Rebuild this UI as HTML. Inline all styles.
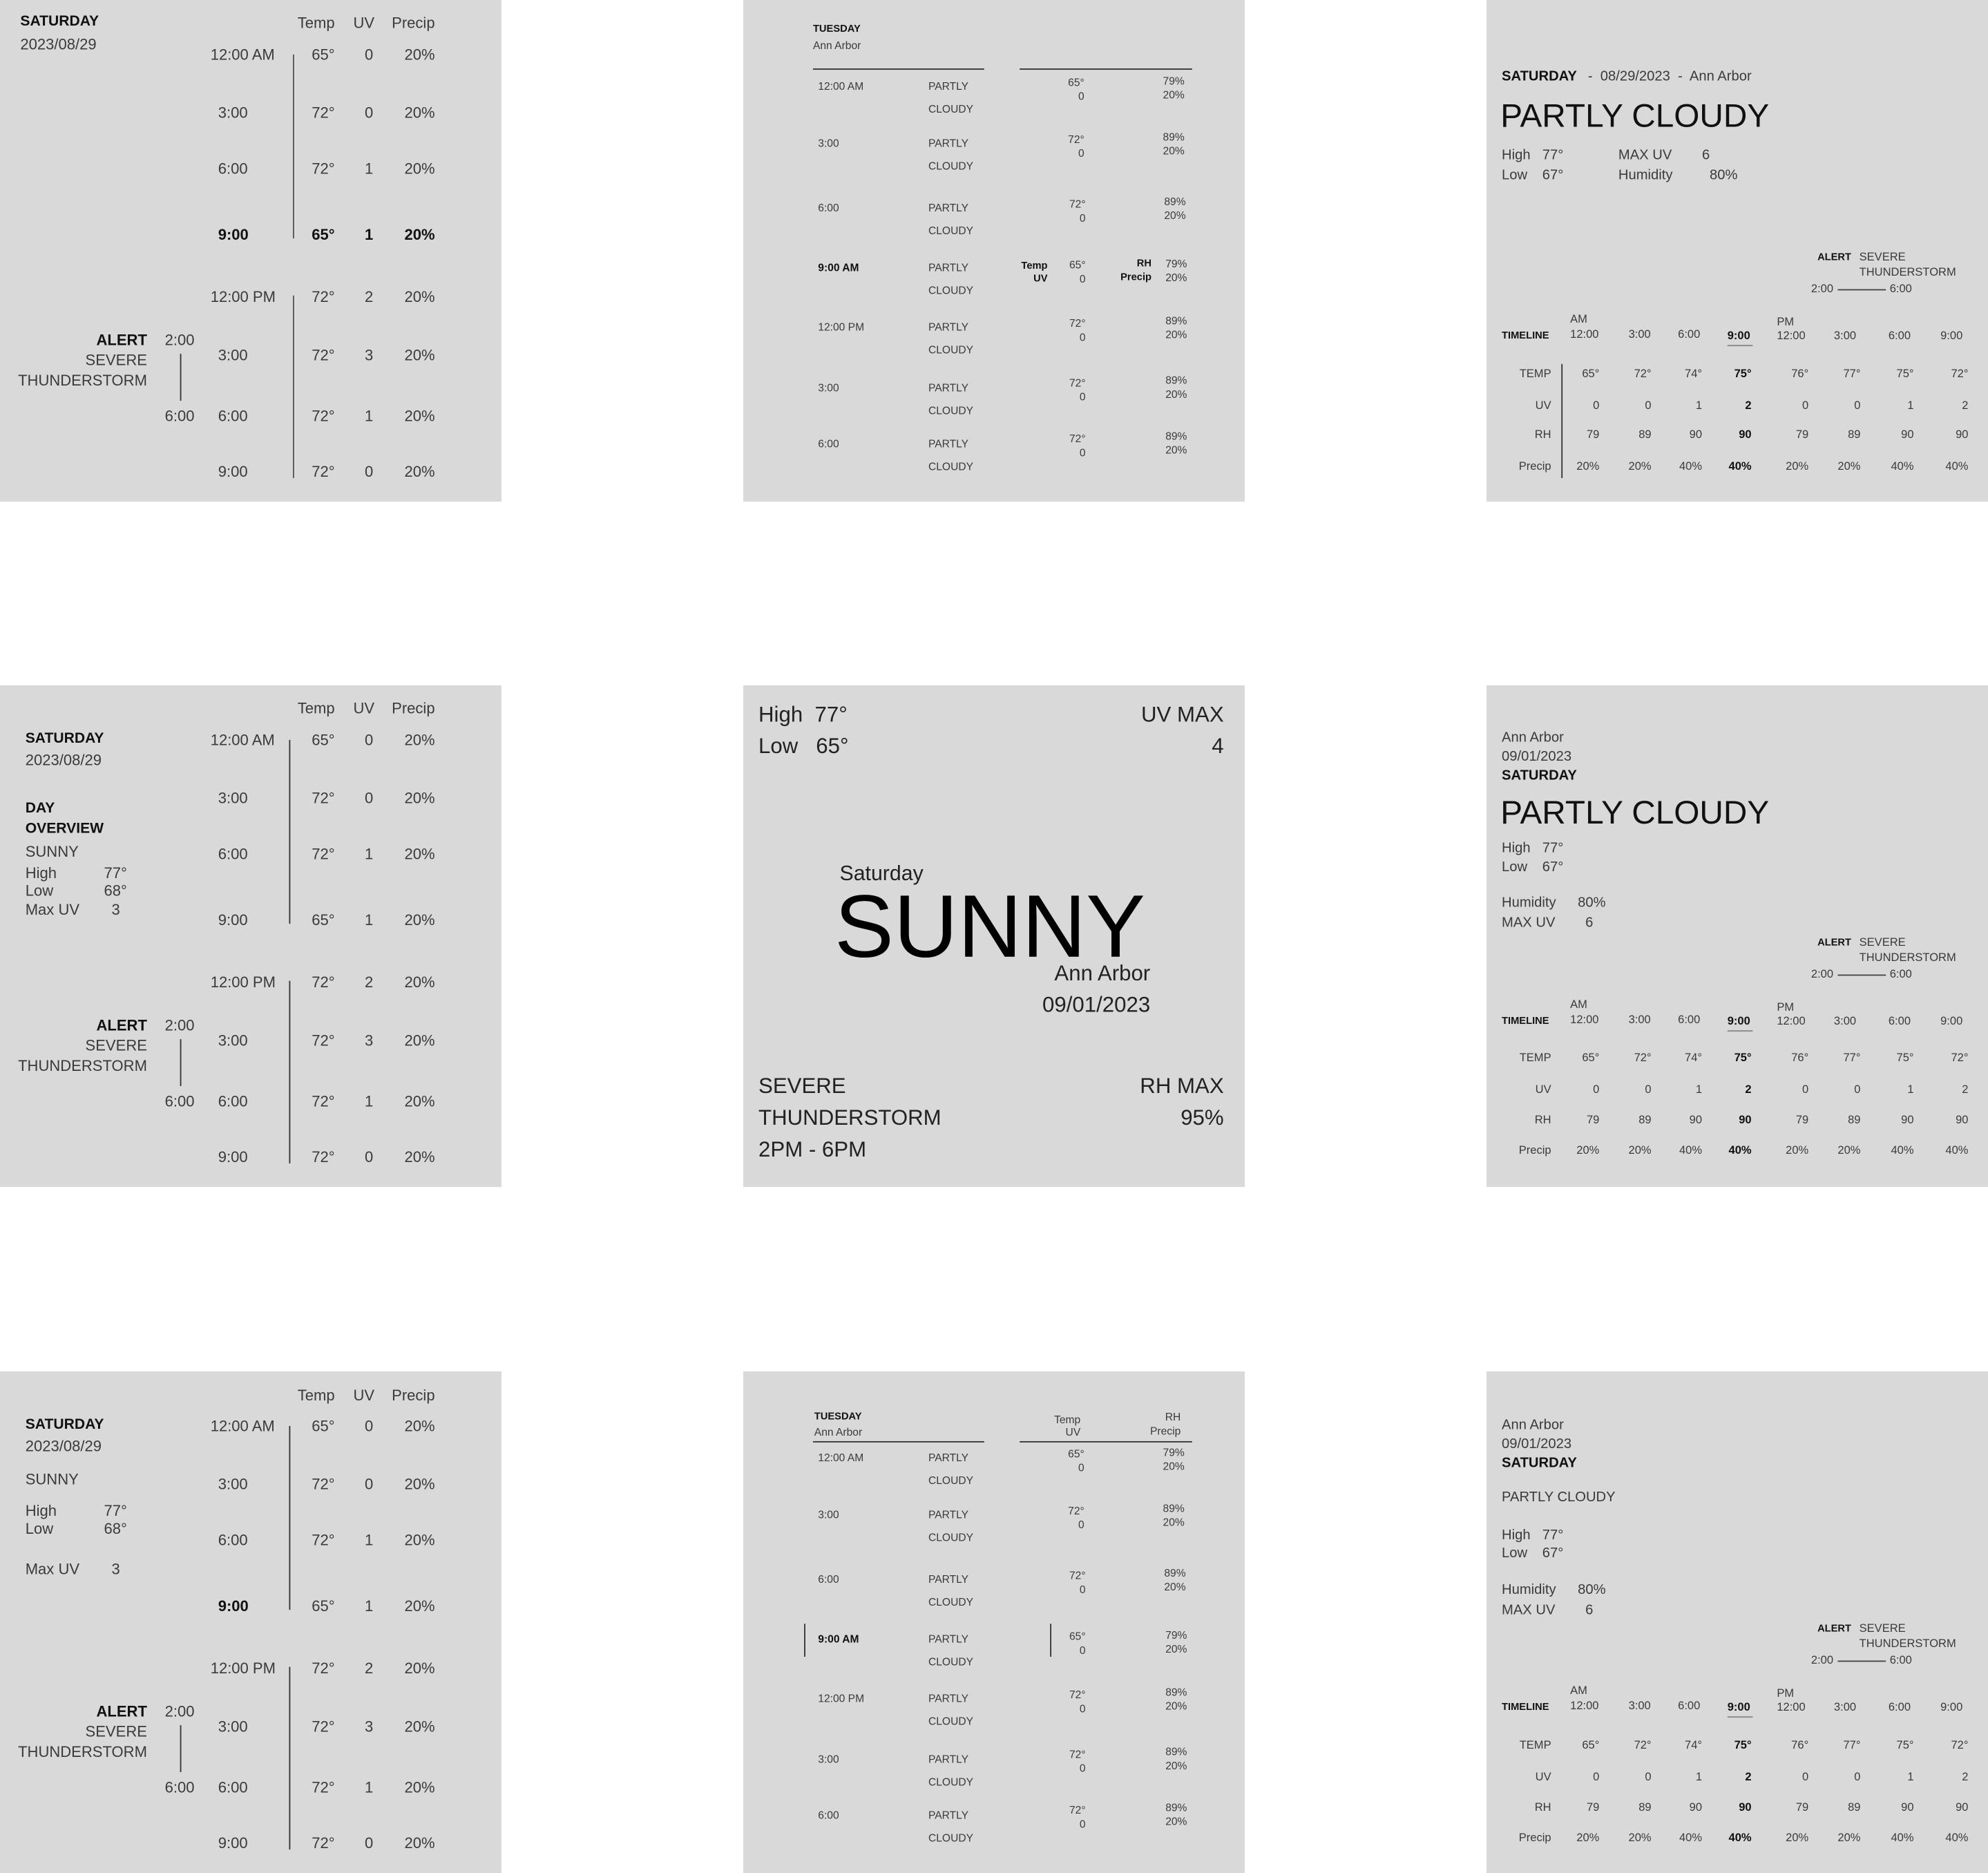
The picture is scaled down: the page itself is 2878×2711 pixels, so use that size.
<!DOCTYPE html>
<html><head><meta charset="utf-8">
<style>
*{margin:0;padding:0;box-sizing:border-box}
html,body{width:2878px;height:2711px;background:#fff;overflow:hidden}
body{position:relative;font-family:"Liberation Sans",sans-serif;color:#3a3a3a}
.p{position:absolute;width:726px;height:726px;background:#d9d9d9;overflow:hidden}
.in{position:absolute;left:0;top:0;width:395.5px;height:395.5px;transform:scale(1.8355);transform-origin:0 0}
.in span{position:absolute;white-space:nowrap;transform:translateY(-50%);line-height:1}
.in span.r{transform:translate(-100%,-50%)}
.in span.c{transform:translate(-50%,-50%)}
.b{font-weight:bold;color:#111}
.vl{position:absolute;width:1px;background:#555}
.hl{position:absolute;height:1px;background:#333}
.f12 span{font-size:12px}
.f9 span{font-size:8.5px}
.t span{font-size:9px}
</style></head><body>

<!-- Panel 1 -->
<div class="p" style="left:0;top:0"><div class="in f12">
<span class="b" style="left:16px;top:18px;font-size:11.5px">SATURDAY</span>
<span style="left:16px;top:35px">2023/08/29</span>
<span class="r" style="left:264px;top:18px">Temp</span><span class="c" style="left:287px;top:18px">UV</span><span class="r" style="left:343px;top:18px">Precip</span>
<span style="left:166px;top:43px">12:00 AM</span><span class="r" style="left:264px;top:43px">65°</span><span class="c" style="left:291px;top:43px">0</span><span class="r" style="left:343px;top:43px">20%</span>
<span style="left:172px;top:89px">3:00</span><span class="r" style="left:264px;top:89px">72°</span><span class="c" style="left:291px;top:89px">0</span><span class="r" style="left:343px;top:89px">20%</span>
<span style="left:172px;top:133px">6:00</span><span class="r" style="left:264px;top:133px">72°</span><span class="c" style="left:291px;top:133px">1</span><span class="r" style="left:343px;top:133px">20%</span>
<span class="b" style="left:172px;top:185px">9:00</span><span class="r b" style="left:264px;top:185px">65°</span><span class="c b" style="left:291px;top:185px">1</span><span class="r b" style="left:343px;top:185px">20%</span>
<span style="left:166px;top:234px">12:00 PM</span><span class="r" style="left:264px;top:234px">72°</span><span class="c" style="left:291px;top:234px">2</span><span class="r" style="left:343px;top:234px">20%</span>
<span style="left:172px;top:280px">3:00</span><span class="r" style="left:264px;top:280px">72°</span><span class="c" style="left:291px;top:280px">3</span><span class="r" style="left:343px;top:280px">20%</span>
<span style="left:172px;top:328px">6:00</span><span class="r" style="left:264px;top:328px">72°</span><span class="c" style="left:291px;top:328px">1</span><span class="r" style="left:343px;top:328px">20%</span>
<span style="left:172px;top:372px">9:00</span><span class="r" style="left:264px;top:372px">72°</span><span class="c" style="left:291px;top:372px">0</span><span class="r" style="left:343px;top:372px">20%</span>
<div class="vl" style="left:231px;top:43px;height:145px"></div>
<div class="vl" style="left:231px;top:233px;height:144px"></div>
<span class="r b" style="left:116px;top:268px">ALERT</span><span style="left:130px;top:268px">2:00</span>
<span class="r" style="left:116px;top:284px">SEVERE</span><span class="r" style="left:116px;top:300px">THUNDERSTORM</span>
<div class="vl" style="left:142px;top:279px;height:37px;background:#333"></div>
<span style="left:130px;top:328px">6:00</span>
</div></div>

<!-- Panel 4 -->
<div class="p" style="left:0;top:992px"><div class="in f12">
<span class="r" style="left:264px;top:18px">Temp</span><span class="c" style="left:287px;top:18px">UV</span><span class="r" style="left:343px;top:18px">Precip</span>
<span class="b" style="left:20px;top:43px;font-size:11.5px">SATURDAY</span>
<span style="left:20px;top:59px">2023/08/29</span>
<span class="b" style="left:20px;top:98px;font-size:11.5px">DAY</span>
<span class="b" style="left:20px;top:114px;font-size:11.5px">OVERVIEW</span>
<span style="left:20px;top:131px">SUNNY</span>
<span style="left:20px;top:148px">High</span><span style="left:82px;top:148px">77°</span>
<span style="left:20px;top:162px">Low</span><span style="left:82px;top:162px">68°</span>
<span style="left:20px;top:177px">Max UV</span><span style="left:88px;top:177px">3</span>
<span style="left:166px;top:43px">12:00 AM</span><span class="r" style="left:264px;top:43px">65°</span><span class="c" style="left:291px;top:43px">0</span><span class="r" style="left:343px;top:43px">20%</span>
<span style="left:172px;top:89px">3:00</span><span class="r" style="left:264px;top:89px">72°</span><span class="c" style="left:291px;top:89px">0</span><span class="r" style="left:343px;top:89px">20%</span>
<span style="left:172px;top:133px">6:00</span><span class="r" style="left:264px;top:133px">72°</span><span class="c" style="left:291px;top:133px">1</span><span class="r" style="left:343px;top:133px">20%</span>
<span style="left:172px;top:185px">9:00</span><span class="r" style="left:264px;top:185px">65°</span><span class="c" style="left:291px;top:185px">1</span><span class="r" style="left:343px;top:185px">20%</span>
<span style="left:166px;top:234px">12:00 PM</span><span class="r" style="left:264px;top:234px">72°</span><span class="c" style="left:291px;top:234px">2</span><span class="r" style="left:343px;top:234px">20%</span>
<span style="left:172px;top:280px">3:00</span><span class="r" style="left:264px;top:280px">72°</span><span class="c" style="left:291px;top:280px">3</span><span class="r" style="left:343px;top:280px">20%</span>
<span style="left:172px;top:328px">6:00</span><span class="r" style="left:264px;top:328px">72°</span><span class="c" style="left:291px;top:328px">1</span><span class="r" style="left:343px;top:328px">20%</span>
<span style="left:172px;top:372px">9:00</span><span class="r" style="left:264px;top:372px">72°</span><span class="c" style="left:291px;top:372px">0</span><span class="r" style="left:343px;top:372px">20%</span>
<div class="vl" style="left:228px;top:43px;height:145px;background:#333"></div>
<div class="vl" style="left:228px;top:233px;height:144px;background:#333"></div>
<span class="r b" style="left:116px;top:268px">ALERT</span><span style="left:130px;top:268px">2:00</span>
<span class="r" style="left:116px;top:284px">SEVERE</span><span class="r" style="left:116px;top:300px">THUNDERSTORM</span>
<div class="vl" style="left:142px;top:279px;height:37px;background:#333"></div>
<span style="left:130px;top:328px">6:00</span>
</div></div>

<!-- Panel 7 -->
<div class="p" style="left:0;top:1985px"><div class="in f12">
<span class="r" style="left:264px;top:19px">Temp</span><span class="c" style="left:287px;top:19px">UV</span><span class="r" style="left:343px;top:19px">Precip</span>
<span class="b" style="left:20px;top:43px;font-size:11.5px">SATURDAY</span>
<span style="left:20px;top:59px">2023/08/29</span>
<span style="left:20px;top:85px">SUNNY</span>
<span style="left:20px;top:110px">High</span><span style="left:82px;top:110px">77°</span>
<span style="left:20px;top:124px">Low</span><span style="left:82px;top:124px">68°</span>
<span style="left:20px;top:156px">Max UV</span><span style="left:88px;top:156px">3</span>
<span style="left:166px;top:43px">12:00 AM</span><span class="r" style="left:264px;top:43px">65°</span><span class="c" style="left:291px;top:43px">0</span><span class="r" style="left:343px;top:43px">20%</span>
<span style="left:172px;top:89px">3:00</span><span class="r" style="left:264px;top:89px">72°</span><span class="c" style="left:291px;top:89px">0</span><span class="r" style="left:343px;top:89px">20%</span>
<span style="left:172px;top:133px">6:00</span><span class="r" style="left:264px;top:133px">72°</span><span class="c" style="left:291px;top:133px">1</span><span class="r" style="left:343px;top:133px">20%</span>
<span class="b" style="left:172px;top:185px">9:00</span><span class="r" style="left:264px;top:185px">65°</span><span class="c" style="left:291px;top:185px">1</span><span class="r" style="left:343px;top:185px">20%</span>
<span style="left:166px;top:234px">12:00 PM</span><span class="r" style="left:264px;top:234px">72°</span><span class="c" style="left:291px;top:234px">2</span><span class="r" style="left:343px;top:234px">20%</span>
<span style="left:172px;top:280px">3:00</span><span class="r" style="left:264px;top:280px">72°</span><span class="c" style="left:291px;top:280px">3</span><span class="r" style="left:343px;top:280px">20%</span>
<span style="left:172px;top:328px">6:00</span><span class="r" style="left:264px;top:328px">72°</span><span class="c" style="left:291px;top:328px">1</span><span class="r" style="left:343px;top:328px">20%</span>
<span style="left:172px;top:372px">9:00</span><span class="r" style="left:264px;top:372px">72°</span><span class="c" style="left:291px;top:372px">0</span><span class="r" style="left:343px;top:372px">20%</span>
<div class="vl" style="left:228px;top:43px;height:145px;background:#333"></div>
<div class="vl" style="left:228px;top:233px;height:144px;background:#333"></div>
<span class="r b" style="left:116px;top:268px">ALERT</span><span style="left:130px;top:268px">2:00</span>
<span class="r" style="left:116px;top:284px">SEVERE</span><span class="r" style="left:116px;top:300px">THUNDERSTORM</span>
<div class="vl" style="left:142px;top:279px;height:37px;background:#333"></div>
<span style="left:130px;top:328px">6:00</span>
</div></div>

<!-- Panel 2 -->
<div class="p" style="left:1076px;top:0"><div class="in f9">
<span class="b" style="left:55px;top:23px;font-size:8px">TUESDAY</span>
<span style="left:55px;top:36px">Ann Arbor</span>
<div class="hl" style="left:55px;top:54px;width:135px"></div>
<div class="hl" style="left:218px;top:54px;width:136px"></div>
<span style="left:59px;top:68px">12:00 AM</span><span style="left:146px;top:68px">PARTLY</span><span style="left:146px;top:86px">CLOUDY</span><span class="r" style="left:269px;top:65px">65°</span><span class="r" style="left:269px;top:76px">0</span><span class="r" style="left:348px;top:64px">79%</span><span class="r" style="left:348px;top:75px">20%</span>
<span style="left:59px;top:113px">3:00</span><span style="left:146px;top:113px">PARTLY</span><span style="left:146px;top:131px">CLOUDY</span><span class="r" style="left:269px;top:110px">72°</span><span class="r" style="left:269px;top:121px">0</span><span class="r" style="left:348px;top:108px">89%</span><span class="r" style="left:348px;top:119px">20%</span>
<span style="left:59px;top:164px">6:00</span><span style="left:146px;top:164px">PARTLY</span><span style="left:146px;top:182px">CLOUDY</span><span class="r" style="left:270px;top:161px">72°</span><span class="r" style="left:270px;top:172px">0</span><span class="r" style="left:349px;top:159px">89%</span><span class="r" style="left:349px;top:170px">20%</span>
<span class="b" style="left:59px;top:211px">9:00 AM</span><span style="left:146px;top:211px">PARTLY</span><span style="left:146px;top:229px">CLOUDY</span><span class="r b" style="left:240px;top:210px;font-size:8px">Temp</span><span class="r b" style="left:240px;top:220px;font-size:8px">UV</span><span class="r" style="left:270px;top:209px">65°</span><span class="r" style="left:270px;top:220px">0</span><span class="r b" style="left:322px;top:208px;font-size:8px">RH</span><span class="r b" style="left:322px;top:219px;font-size:8px">Precip</span><span class="r" style="left:350px;top:208px">79%</span><span class="r" style="left:350px;top:219px">20%</span>
<span style="left:59px;top:258px">12:00 PM</span><span style="left:146px;top:258px">PARTLY</span><span style="left:146px;top:276px">CLOUDY</span><span class="r" style="left:270px;top:255px">72°</span><span class="r" style="left:270px;top:266px">0</span><span class="r" style="left:350px;top:253px">89%</span><span class="r" style="left:350px;top:264px">20%</span>
<span style="left:59px;top:306px">3:00</span><span style="left:146px;top:306px">PARTLY</span><span style="left:146px;top:324px">CLOUDY</span><span class="r" style="left:270px;top:302px">72°</span><span class="r" style="left:270px;top:313px">0</span><span class="r" style="left:350px;top:300px">89%</span><span class="r" style="left:350px;top:311px">20%</span>
<span style="left:59px;top:350px">6:00</span><span style="left:146px;top:350px">PARTLY</span><span style="left:146px;top:368px">CLOUDY</span><span class="r" style="left:270px;top:346px">72°</span><span class="r" style="left:270px;top:357px">0</span><span class="r" style="left:350px;top:344px">89%</span><span class="r" style="left:350px;top:355px">20%</span>
</div></div>

<!-- Panel 8 -->
<div class="p" style="left:1076px;top:1985px"><div class="in f9">
<span class="b" style="left:56px;top:36px;font-size:8px">TUESDAY</span>
<span style="left:56px;top:48px">Ann Arbor</span>
<span class="r" style="left:266px;top:38px">Temp</span><span class="r" style="left:266px;top:48px">UV</span>
<span class="r" style="left:345px;top:36px">RH</span><span class="r" style="left:345px;top:47px">Precip</span>
<div class="hl" style="left:55px;top:55px;width:135px"></div>
<div class="hl" style="left:218px;top:55px;width:136px"></div>
<span style="left:59px;top:68px">12:00 AM</span><span style="left:146px;top:68px">PARTLY</span><span style="left:146px;top:86px">CLOUDY</span><span class="r" style="left:269px;top:65px">65°</span><span class="r" style="left:269px;top:76px">0</span><span class="r" style="left:348px;top:64px">79%</span><span class="r" style="left:348px;top:75px">20%</span>
<span style="left:59px;top:113px">3:00</span><span style="left:146px;top:113px">PARTLY</span><span style="left:146px;top:131px">CLOUDY</span><span class="r" style="left:269px;top:110px">72°</span><span class="r" style="left:269px;top:121px">0</span><span class="r" style="left:348px;top:108px">89%</span><span class="r" style="left:348px;top:119px">20%</span>
<span style="left:59px;top:164px">6:00</span><span style="left:146px;top:164px">PARTLY</span><span style="left:146px;top:182px">CLOUDY</span><span class="r" style="left:270px;top:161px">72°</span><span class="r" style="left:270px;top:172px">0</span><span class="r" style="left:349px;top:159px">89%</span><span class="r" style="left:349px;top:170px">20%</span>
<span class="b" style="left:59px;top:211px">9:00 AM</span><span style="left:146px;top:211px">PARTLY</span><span style="left:146px;top:229px">CLOUDY</span><span class="r" style="left:270px;top:209px">65°</span><span class="r" style="left:270px;top:220px">0</span><span class="r" style="left:350px;top:208px">79%</span><span class="r" style="left:350px;top:219px">20%</span>
<div class="vl" style="left:48px;top:199px;height:26px;background:#333"></div>
<div class="vl" style="left:242px;top:199px;height:26px;background:#333"></div>
<span style="left:59px;top:258px">12:00 PM</span><span style="left:146px;top:258px">PARTLY</span><span style="left:146px;top:276px">CLOUDY</span><span class="r" style="left:270px;top:255px">72°</span><span class="r" style="left:270px;top:266px">0</span><span class="r" style="left:350px;top:253px">89%</span><span class="r" style="left:350px;top:264px">20%</span>
<span style="left:59px;top:306px">3:00</span><span style="left:146px;top:306px">PARTLY</span><span style="left:146px;top:324px">CLOUDY</span><span class="r" style="left:270px;top:302px">72°</span><span class="r" style="left:270px;top:313px">0</span><span class="r" style="left:350px;top:300px">89%</span><span class="r" style="left:350px;top:311px">20%</span>
<span style="left:59px;top:350px">6:00</span><span style="left:146px;top:350px">PARTLY</span><span style="left:146px;top:368px">CLOUDY</span><span class="r" style="left:270px;top:346px">72°</span><span class="r" style="left:270px;top:357px">0</span><span class="r" style="left:350px;top:344px">89%</span><span class="r" style="left:350px;top:355px">20%</span>
</div></div>

<!-- Panel 5 -->
<div class="p" style="left:1076px;top:992px"><div class="in" style="color:#222">
<span style="left:12px;top:23px;font-size:17px">High&nbsp; 77°</span>
<span style="left:12px;top:48px;font-size:17px">Low&nbsp;&nbsp; 65°</span>
<span class="r" style="left:379px;top:23px;font-size:17px">UV MAX</span>
<span class="r" style="left:379px;top:48px;font-size:17px">4</span>
<span style="left:76px;top:149px;font-size:16.5px">Saturday</span>
<span style="left:72px;top:190px;font-size:70px;color:#000">SUNNY</span>
<span class="r" style="left:321px;top:227px;font-size:17px">Ann Arbor</span>
<span class="r" style="left:321px;top:252px;font-size:17px">09/01/2023</span>
<span style="left:12px;top:316px;font-size:17px">SEVERE</span>
<span style="left:12px;top:341px;font-size:17px">THUNDERSTORM</span>
<span style="left:12px;top:366px;font-size:17px">2PM - 6PM</span>
<span class="r" style="left:379px;top:316px;font-size:17px">RH MAX</span>
<span class="r" style="left:379px;top:341px;font-size:17px">95%</span>
</div></div>

<!-- Panel 3 -->
<div class="p" style="left:2152px;top:0"><div class="in">
<span class="b" style="left:12px;top:61px;font-size:11px">SATURDAY</span>
<span style="left:80px;top:61px;font-size:11px">-&nbsp; 08/29/2023 &nbsp;-&nbsp; Ann Arbor</span>
<span style="left:11px;top:91px;font-size:26px;color:#111">PARTLY CLOUDY</span>
<span style="left:12px;top:123px;font-size:11px">High</span><span style="left:44px;top:123px;font-size:11px">77°</span>
<span style="left:12px;top:139px;font-size:11px">Low</span><span style="left:44px;top:139px;font-size:11px">67°</span>
<span style="left:104px;top:123px;font-size:11px">MAX UV</span><span style="left:170px;top:123px;font-size:11px">6</span>
<span style="left:104px;top:139px;font-size:11px">Humidity</span><span style="left:176px;top:139px;font-size:11px">80%</span>
</div></div>

<!-- Panel 6 -->
<div class="p" style="left:2152px;top:992px"><div class="in">
<span style="left:12px;top:42px;font-size:11px">Ann Arbor</span>
<span style="left:12px;top:57px;font-size:11px">09/01/2023</span>
<span class="b" style="left:12px;top:72px;font-size:11px">SATURDAY</span>
<span style="left:11px;top:100px;font-size:26px;color:#111">PARTLY CLOUDY</span>
<span style="left:12px;top:129px;font-size:11px">High</span><span style="left:44px;top:129px;font-size:11px">77°</span>
<span style="left:12px;top:144px;font-size:11px">Low</span><span style="left:44px;top:144px;font-size:11px">67°</span>
<span style="left:12px;top:172px;font-size:11px">Humidity</span><span style="left:72px;top:172px;font-size:11px">80%</span>
<span style="left:12px;top:188px;font-size:11px">MAX UV</span><span style="left:78px;top:188px;font-size:11px">6</span>
</div></div>

<!-- Panel 9 -->
<div class="p" style="left:2152px;top:1985px"><div class="in">
<span style="left:12px;top:43px;font-size:11px">Ann Arbor</span>
<span style="left:12px;top:58px;font-size:11px">09/01/2023</span>
<span class="b" style="left:12px;top:73px;font-size:11px">SATURDAY</span>
<span style="left:12px;top:100px;font-size:11px">PARTLY CLOUDY</span>
<span style="left:12px;top:130px;font-size:11px">High</span><span style="left:44px;top:130px;font-size:11px">77°</span>
<span style="left:12px;top:144px;font-size:11px">Low</span><span style="left:44px;top:144px;font-size:11px">67°</span>
<span style="left:12px;top:173px;font-size:11px">Humidity</span><span style="left:72px;top:173px;font-size:11px">80%</span>
<span style="left:12px;top:189px;font-size:11px">MAX UV</span><span style="left:78px;top:189px;font-size:11px">6</span>
</div></div>

<!-- Timeline blocks (shared), one per right-column panel -->
<div class="p" style="left:2152px;top:0;background:transparent"><div class="in t" id="tl1">
<span class="b" style="left:261px;top:203px;font-size:8px">ALERT</span><span style="left:294px;top:203px">SEVERE</span><span style="left:294px;top:215px">THUNDERSTORM</span>
<span style="left:256px;top:228px">2:00</span><div class="hl" style="left:277px;top:228px;width:38px;background:#444"></div><span style="left:318px;top:228px">6:00</span>
<span style="left:66px;top:252px">AM</span><span style="left:229px;top:254px">PM</span>
<span class="b" style="left:12px;top:265px;font-size:8px">TIMELINE</span>
<span style="left:66px;top:264px">12:00</span><span style="left:112px;top:264px">3:00</span><span style="left:151px;top:264px">6:00</span><span class="b" style="left:190px;top:265px">9:00</span>
<div class="hl" style="left:190px;top:272px;width:20px;background:#888"></div>
<span style="left:229px;top:265px">12:00</span><span style="left:274px;top:265px">3:00</span><span style="left:317px;top:265px">6:00</span><span style="left:358px;top:265px">9:00</span>
<div class="vl" style="left:59px;top:287px;height:90px;background:#333"></div>
<span class="r" style="left:51px;top:295px">TEMP</span><span class="r" style="left:51px;top:320px">UV</span><span class="r" style="left:51px;top:343px">RH</span><span class="r" style="left:51px;top:368px">Precip</span>
<span class="r" style="left:89px;top:295px">65°</span><span class="r" style="left:130px;top:295px">72°</span><span class="r" style="left:170px;top:295px">74°</span><span class="r b" style="left:209px;top:295px">75°</span><span class="r" style="left:254px;top:295px">76°</span><span class="r" style="left:295px;top:295px">77°</span><span class="r" style="left:337px;top:295px">75°</span><span class="r" style="left:380px;top:295px">72°</span>
<span class="r" style="left:89px;top:320px">0</span><span class="r" style="left:130px;top:320px">0</span><span class="r" style="left:170px;top:320px">1</span><span class="r b" style="left:209px;top:320px">2</span><span class="r" style="left:254px;top:320px">0</span><span class="r" style="left:295px;top:320px">0</span><span class="r" style="left:337px;top:320px">1</span><span class="r" style="left:380px;top:320px">2</span>
<span class="r" style="left:89px;top:343px">79</span><span class="r" style="left:130px;top:343px">89</span><span class="r" style="left:170px;top:343px">90</span><span class="r b" style="left:209px;top:343px">90</span><span class="r" style="left:254px;top:343px">79</span><span class="r" style="left:295px;top:343px">89</span><span class="r" style="left:337px;top:343px">90</span><span class="r" style="left:380px;top:343px">90</span>
<span class="r" style="left:89px;top:368px">20%</span><span class="r" style="left:130px;top:368px">20%</span><span class="r" style="left:170px;top:368px">40%</span><span class="r b" style="left:209px;top:368px">40%</span><span class="r" style="left:254px;top:368px">20%</span><span class="r" style="left:295px;top:368px">20%</span><span class="r" style="left:337px;top:368px">40%</span><span class="r" style="left:380px;top:368px">40%</span>
</div></div>

<div class="p" style="left:2152px;top:992px;background:transparent"><div class="in t">
<span class="b" style="left:261px;top:203px;font-size:8px">ALERT</span><span style="left:294px;top:203px">SEVERE</span><span style="left:294px;top:215px">THUNDERSTORM</span>
<span style="left:256px;top:228px">2:00</span><div class="hl" style="left:277px;top:228px;width:38px;background:#444"></div><span style="left:318px;top:228px">6:00</span>
<span style="left:66px;top:252px">AM</span><span style="left:229px;top:254px">PM</span>
<span class="b" style="left:12px;top:265px;font-size:8px">TIMELINE</span>
<span style="left:66px;top:264px">12:00</span><span style="left:112px;top:264px">3:00</span><span style="left:151px;top:264px">6:00</span><span class="b" style="left:190px;top:265px">9:00</span>
<div class="hl" style="left:190px;top:272px;width:20px;background:#888"></div>
<span style="left:229px;top:265px">12:00</span><span style="left:274px;top:265px">3:00</span><span style="left:317px;top:265px">6:00</span><span style="left:358px;top:265px">9:00</span>
<span class="r" style="left:51px;top:294px">TEMP</span><span class="r" style="left:51px;top:319px">UV</span><span class="r" style="left:51px;top:343px">RH</span><span class="r" style="left:51px;top:367px">Precip</span>
<span class="r" style="left:89px;top:294px">65°</span><span class="r" style="left:130px;top:294px">72°</span><span class="r" style="left:170px;top:294px">74°</span><span class="r b" style="left:209px;top:294px">75°</span><span class="r" style="left:254px;top:294px">76°</span><span class="r" style="left:295px;top:294px">77°</span><span class="r" style="left:337px;top:294px">75°</span><span class="r" style="left:380px;top:294px">72°</span>
<span class="r" style="left:89px;top:319px">0</span><span class="r" style="left:130px;top:319px">0</span><span class="r" style="left:170px;top:319px">1</span><span class="r b" style="left:209px;top:319px">2</span><span class="r" style="left:254px;top:319px">0</span><span class="r" style="left:295px;top:319px">0</span><span class="r" style="left:337px;top:319px">1</span><span class="r" style="left:380px;top:319px">2</span>
<span class="r" style="left:89px;top:343px">79</span><span class="r" style="left:130px;top:343px">89</span><span class="r" style="left:170px;top:343px">90</span><span class="r b" style="left:209px;top:343px">90</span><span class="r" style="left:254px;top:343px">79</span><span class="r" style="left:295px;top:343px">89</span><span class="r" style="left:337px;top:343px">90</span><span class="r" style="left:380px;top:343px">90</span>
<span class="r" style="left:89px;top:367px">20%</span><span class="r" style="left:130px;top:367px">20%</span><span class="r" style="left:170px;top:367px">40%</span><span class="r b" style="left:209px;top:367px">40%</span><span class="r" style="left:254px;top:367px">20%</span><span class="r" style="left:295px;top:367px">20%</span><span class="r" style="left:337px;top:367px">40%</span><span class="r" style="left:380px;top:367px">40%</span>
</div></div>

<div class="p" style="left:2152px;top:1985px;background:transparent"><div class="in t">
<span class="b" style="left:261px;top:203px;font-size:8px">ALERT</span><span style="left:294px;top:203px">SEVERE</span><span style="left:294px;top:215px">THUNDERSTORM</span>
<span style="left:256px;top:228px">2:00</span><div class="hl" style="left:277px;top:228px;width:38px;background:#444"></div><span style="left:318px;top:228px">6:00</span>
<span style="left:66px;top:252px">AM</span><span style="left:229px;top:254px">PM</span>
<span class="b" style="left:12px;top:265px;font-size:8px">TIMELINE</span>
<span style="left:66px;top:264px">12:00</span><span style="left:112px;top:264px">3:00</span><span style="left:151px;top:264px">6:00</span><span class="b" style="left:190px;top:265px">9:00</span>
<div class="hl" style="left:190px;top:272px;width:20px;background:#888"></div>
<span style="left:229px;top:265px">12:00</span><span style="left:274px;top:265px">3:00</span><span style="left:317px;top:265px">6:00</span><span style="left:358px;top:265px">9:00</span>
<span class="r" style="left:51px;top:295px">TEMP</span><span class="r" style="left:51px;top:320px">UV</span><span class="r" style="left:51px;top:344px">RH</span><span class="r" style="left:51px;top:368px">Precip</span>
<span class="r" style="left:89px;top:295px">65°</span><span class="r" style="left:130px;top:295px">72°</span><span class="r" style="left:170px;top:295px">74°</span><span class="r b" style="left:209px;top:295px">75°</span><span class="r" style="left:254px;top:295px">76°</span><span class="r" style="left:295px;top:295px">77°</span><span class="r" style="left:337px;top:295px">75°</span><span class="r" style="left:380px;top:295px">72°</span>
<span class="r" style="left:89px;top:320px">0</span><span class="r" style="left:130px;top:320px">0</span><span class="r" style="left:170px;top:320px">1</span><span class="r b" style="left:209px;top:320px">2</span><span class="r" style="left:254px;top:320px">0</span><span class="r" style="left:295px;top:320px">0</span><span class="r" style="left:337px;top:320px">1</span><span class="r" style="left:380px;top:320px">2</span>
<span class="r" style="left:89px;top:344px">79</span><span class="r" style="left:130px;top:344px">89</span><span class="r" style="left:170px;top:344px">90</span><span class="r b" style="left:209px;top:344px">90</span><span class="r" style="left:254px;top:344px">79</span><span class="r" style="left:295px;top:344px">89</span><span class="r" style="left:337px;top:344px">90</span><span class="r" style="left:380px;top:344px">90</span>
<span class="r" style="left:89px;top:368px">20%</span><span class="r" style="left:130px;top:368px">20%</span><span class="r" style="left:170px;top:368px">40%</span><span class="r b" style="left:209px;top:368px">40%</span><span class="r" style="left:254px;top:368px">20%</span><span class="r" style="left:295px;top:368px">20%</span><span class="r" style="left:337px;top:368px">40%</span><span class="r" style="left:380px;top:368px">40%</span>
</div></div>

</body></html>
